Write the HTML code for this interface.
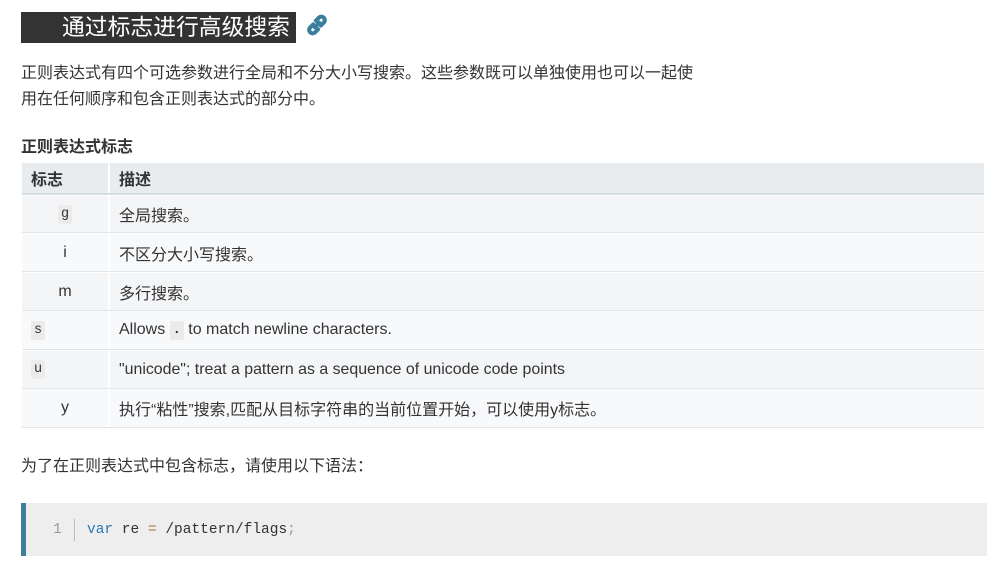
<!DOCTYPE html>
<html><head><meta charset="utf-8"><style>
body{margin:0;width:998px;height:565px;background:#fff;font-family:"Liberation Sans","Noto Sans CJK SC",sans-serif;color:#333;position:relative;overflow:hidden}
.a{position:absolute}
.h{left:21px;top:12px;width:275px;height:31px;background:#333;color:#fff;font-size:22.8px;line-height:31px;box-sizing:border-box;padding-left:41px;white-space:nowrap}
.p{font-size:16px;line-height:26px}
.row{left:22px;width:962px;background:#f4f5f7;border-bottom:1px solid #e2e5e8;font-size:16px}
.row.l{background:#f8f9fb}
.c1{position:absolute;left:0;width:86px;top:0;bottom:0;display:flex;align-items:center;justify-content:center}
.c1.L{justify-content:flex-start;padding-left:9px}
.c2{position:absolute;left:97px;top:0;bottom:0;display:flex;align-items:center;white-space:nowrap}
.sep{position:absolute;left:86px;top:0;bottom:0;width:2px;background:#fff}
code{font-family:"Liberation Mono",monospace;font-size:13.5px;background:#ebebeb;padding:2px 3px;border-radius:2px}
</style></head><body>
<div class="a h">通过标志进行高级搜索</div>
<svg class="a" style="left:304px;top:12px" width="26" height="26" viewBox="0 0 24 24"><g fill="none" stroke="#3a7e9e" stroke-width="3.8" stroke-linecap="round"><path d="M10 14 14 10"/><path d="M8.5 11.5 5.5 14.5a3.2 3.2 0 0 0 4.5 4.5l3-3"/><path d="M15.5 12.5 18.5 9.5a3.2 3.2 0 0 0-4.5-4.5l-3 3"/></g></svg>
<div class="a p" style="left:21px;top:61px;width:700px">正则表达式有四个可选参数进行全局和不分大小写搜索。这些参数既可以单独使用也可以一起使<br>用在任何顺序和包含正则表达式的部分中。</div>
<div class="a" style="left:21px;top:138px;font-size:16px;font-weight:bold;line-height:20px">正则表达式标志</div>
<div class="a row" style="top:163px;height:30px;background:#e8ecef;border-bottom:2px solid #d4dde2;font-weight:bold"><div class="c1 L" style="padding-left:9px">标志</div><div class="sep"></div><div class="c2">描述</div></div>
<div class="a row" style="top:196px;height:36px"><div class="c1"><code>g</code></div><div class="sep"></div><div class="c2">全局搜索。</div></div>
<div class="a row l" style="top:234px;height:37px"><div class="c1">i</div><div class="sep"></div><div class="c2">不区分大小写搜索。</div></div>
<div class="a row" style="top:273px;height:37px"><div class="c1">m</div><div class="sep"></div><div class="c2">多行搜索。</div></div>
<div class="a row l" style="top:311px;height:38px"><div class="c1 L"><code>s</code></div><div class="sep"></div><div class="c2">Allows&nbsp;<code style="font-weight:bold">.</code>&nbsp;to match newline characters.</div></div>
<div class="a row" style="top:351px;height:37px"><div class="c1 L"><code>u</code></div><div class="sep"></div><div class="c2" style="font-size:15.9px">"unicode"; treat a pattern as a sequence of unicode code points</div></div>
<div class="a row l" style="top:389px;height:38px"><div class="c1">y</div><div class="sep"></div><div class="c2">执行“粘性”搜索,匹配从目标字符串的当前位置开始，可以使用y标志。</div></div>
<div class="a p" style="left:21px;top:454px">为了在正则表达式中包含标志，请使用以下语法：</div>
<div class="a" style="left:21px;top:503px;width:966px;height:53px;background:#eee;border-left:5px solid #3f7f9c;box-sizing:border-box"></div>
<div class="a" style="left:53px;top:521px;font-family:'Liberation Mono',monospace;font-size:14.5px;color:#999;line-height:18px">1</div>
<div class="a" style="left:74px;top:519px;width:1px;height:22px;background:#bbb"></div>
<div class="a" style="left:87px;top:521px;font-family:'Liberation Mono',monospace;font-size:14.5px;line-height:18px;color:#333;white-space:pre"><span style="color:#2a7ab0">var</span> re <span style="color:#a67f59">=</span> /pattern/flags<span style="color:#999">;</span></div>
</body></html>
